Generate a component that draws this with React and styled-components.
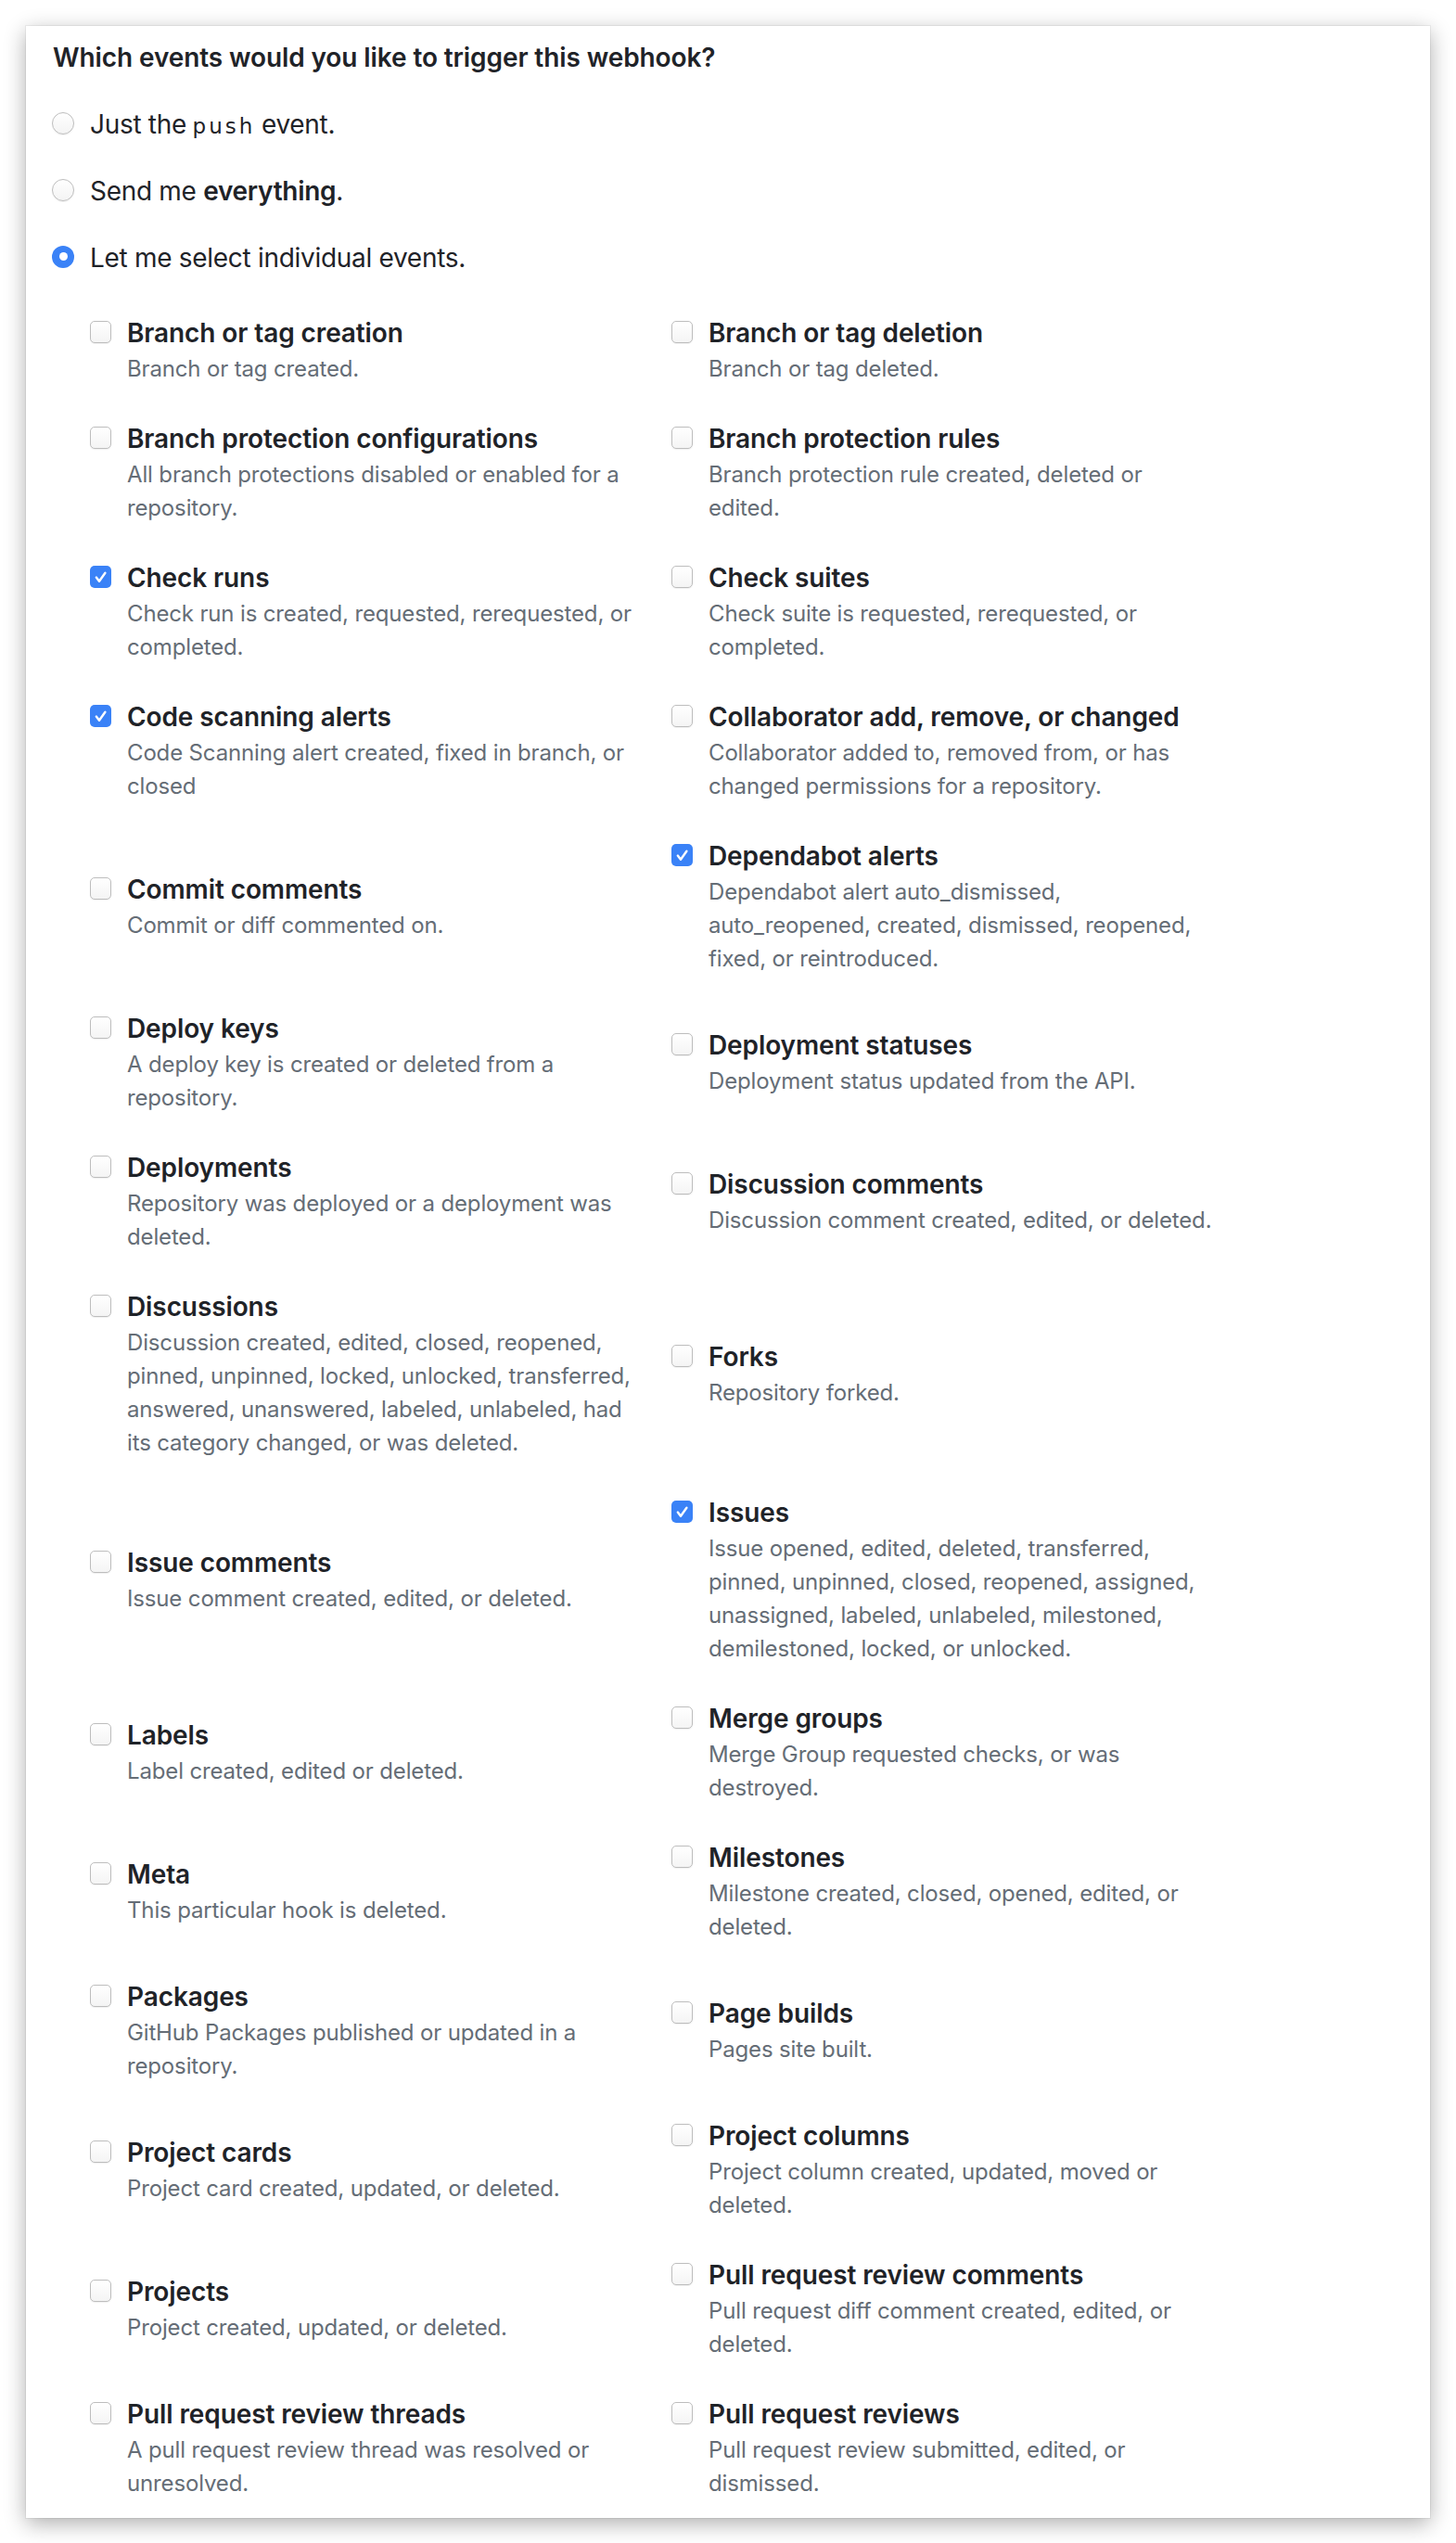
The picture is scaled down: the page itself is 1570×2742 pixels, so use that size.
import React from 'react';
import styled, { createGlobalStyle } from 'styled-components';

const GlobalStyle = createGlobalStyle`
  body {
    margin: 0;
    background: #ffffff;
    font-family: Inter, "Noto Sans", sans-serif;
    color: #1f2328;
  }
`;

const EVENTS = [
  ['Branch or tag creation', 'Branch or tag created.', false],
  ['Branch or tag deletion', 'Branch or tag deleted.', false],
  ['Branch protection configurations', 'All branch protections disabled or enabled for a repository.', false],
  ['Branch protection rules', 'Branch protection rule created, deleted or edited.', false],
  ['Check runs', 'Check run is created, requested, rerequested, or completed.', true],
  ['Check suites', 'Check suite is requested, rerequested, or completed.', false],
  ['Code scanning alerts', 'Code Scanning alert created, fixed in branch, or closed', true],
  ['Collaborator add, remove, or changed', 'Collaborator added to, removed from, or has changed permissions for a repository.', false],
  ['Commit comments', 'Commit or diff commented on.', false],
  ['Dependabot alerts', 'Dependabot alert auto_dismissed, auto_reopened, created, dismissed, reopened, fixed, or reintroduced.', true],
  ['Deploy keys', 'A deploy key is created or deleted from a repository.', false],
  ['Deployment statuses', 'Deployment status updated from the API.', false],
  ['Deployments', 'Repository was deployed or a deployment was deleted.', false],
  ['Discussion comments', 'Discussion comment created, edited, or deleted.', false],
  ['Discussions', 'Discussion created, edited, closed, reopened, pinned, unpinned, locked, unlocked, transferred, answered, unanswered, labeled, unlabeled, had its category changed, or was deleted.', false],
  ['Forks', 'Repository forked.', false],
  ['Issue comments', 'Issue comment created, edited, or deleted.', false],
  ['Issues', 'Issue opened, edited, deleted, transferred, pinned, unpinned, closed, reopened, assigned, unassigned, labeled, unlabeled, milestoned, demilestoned, locked, or unlocked.', true],
  ['Labels', 'Label created, edited or deleted.', false],
  ['Merge groups', 'Merge Group requested checks, or was destroyed.', false],
  ['Meta', 'This particular hook is deleted.', false],
  ['Milestones', 'Milestone created, closed, opened, edited, or deleted.', false],
  ['Packages', 'GitHub Packages published or updated in a repository.', false],
  ['Page builds', 'Pages site built.', false],
  ['Project cards', 'Project card created, updated, or deleted.', false],
  ['Project columns', 'Project column created, updated, moved or deleted.', false],
  ['Projects', 'Project created, updated, or deleted.', false],
  ['Pull request review comments', 'Pull request diff comment created, edited, or deleted.', false],
  ['Pull request review threads', 'A pull request review thread was resolved or unresolved.', false],
  ['Pull request reviews', 'Pull request review submitted, edited, or dismissed.', false],
];

const Page = styled.div`
  padding: 28px 28px 29px;
`;

const Card = styled.div`
  background: #ffffff;
  box-shadow: 0 0 0 1px rgba(0, 0, 0, 0.05), 0 6px 22px rgba(0, 0, 0, 0.32);
  padding: 13px 29px 19px;
`;

const Title = styled.h2`
  margin: 0;
  font-size: 28px;
  line-height: 42px;
  font-weight: 600;
  letter-spacing: -0.1px;
`;

const RadioList = styled.div`
  display: flex;
  flex-direction: column;
  gap: 30px;
  margin-top: 30px;
`;

const RadioRow = styled.label`
  display: flex;
  align-items: center;
  gap: 17px;
  height: 42px;
  margin-left: -1px;
  font-size: 28px;
  line-height: 42px;
  letter-spacing: -0.3px;
`;

const RadioDot = styled.span`
  flex: none;
  box-sizing: border-box;
  width: 24px;
  height: 24px;
  border-radius: 50%;
  margin-top: -3px;
  background: ${(p) => (p.$checked ? '#3a82f7' : 'linear-gradient(#ffffff, #f4f4f4)')};
  border: ${(p) => (p.$checked ? 'none' : '1px solid #bdbdbd')};
  box-shadow: ${(p) => (p.$checked ? 'none' : '0 1px 1px rgba(0,0,0,0.06)')};
  display: flex;
  align-items: center;
  justify-content: center;

  &::after {
    content: '';
    display: ${(p) => (p.$checked ? 'block' : 'none')};
    width: 9px;
    height: 9px;
    border-radius: 50%;
    background: #ffffff;
  }
`;

const Code = styled.code`
  font-family: "DejaVu Sans", sans-serif;
  font-size: 23px;
  line-height: 1;
  letter-spacing: 3px;
  margin: 0 -1px 0 -1px;
`;

const Strong = styled.strong`
  font-weight: 600;
`;

const EventGrid = styled.div`
  display: grid;
  grid-template-columns: 627px 627px;
  row-gap: 36px;
  align-items: center;
  margin: 39px 0 0 40px;
`;

const EventItem = styled.label`
  display: flex;
  align-items: flex-start;
  gap: 17px;
`;

const Box = styled.span`
  flex: none;
  box-sizing: border-box;
  width: 23px;
  height: 24px;
  margin-top: 8px;
  border-radius: 5px;
  background: ${(p) => (p.$checked ? '#3a82f7' : 'linear-gradient(#ffffff, #f4f4f4)')};
  border: ${(p) => (p.$checked ? 'none' : '1px solid #bdbdbd')};
  box-shadow: ${(p) => (p.$checked ? 'none' : '0 1px 1px rgba(0,0,0,0.06)')};
  display: flex;
  align-items: center;
  justify-content: center;
`;

const EventText = styled.div`
  max-width: 546px;
`;

const EventTitle = styled.div`
  font-size: 28px;
  line-height: 42px;
  font-weight: 600;
  letter-spacing: -0.1px;
  color: #1f2328;
`;

const EventDesc = styled.div`
  font-size: 24px;
  line-height: 36px;
  letter-spacing: -0.15px;
  color: #656d76;
`;

const CheckMark = () => (
  <svg width="15" height="15" viewBox="0 0 15 15" fill="none">
    <path d="M2.8 7.6 L6 11.8 L12.4 2.8" stroke="#ffffff" strokeWidth="2.4" strokeLinecap="round" strokeLinejoin="round" />
  </svg>
);

const Checkbox = ({ checked }) => (
  <Box $checked={checked}>{checked && <CheckMark />}</Box>
);

const EventOption = ({ title, desc, checked }) => (
  <EventItem>
    <Checkbox checked={checked} />
    <EventText>
      <EventTitle>{title}</EventTitle>
      <EventDesc>{desc}</EventDesc>
    </EventText>
  </EventItem>
);

export default function App() {
  return (
    <>
      <GlobalStyle />
      <Page>
        <Card>
          <Title>Which events would you like to trigger this webhook?</Title>
          <RadioList>
            <RadioRow>
              <RadioDot />
              <span>Just the <Code>push</Code> event.</span>
            </RadioRow>
            <RadioRow>
              <RadioDot />
              <span>Send me <Strong>everything</Strong>.</span>
            </RadioRow>
            <RadioRow>
              <RadioDot $checked />
              <span>Let me select individual events.</span>
            </RadioRow>
          </RadioList>
          <EventGrid>
            {EVENTS.map(([title, desc, checked]) => (
              <EventOption key={title} title={title} desc={desc} checked={checked} />
            ))}
          </EventGrid>
        </Card>
      </Page>
    </>
  );
}
